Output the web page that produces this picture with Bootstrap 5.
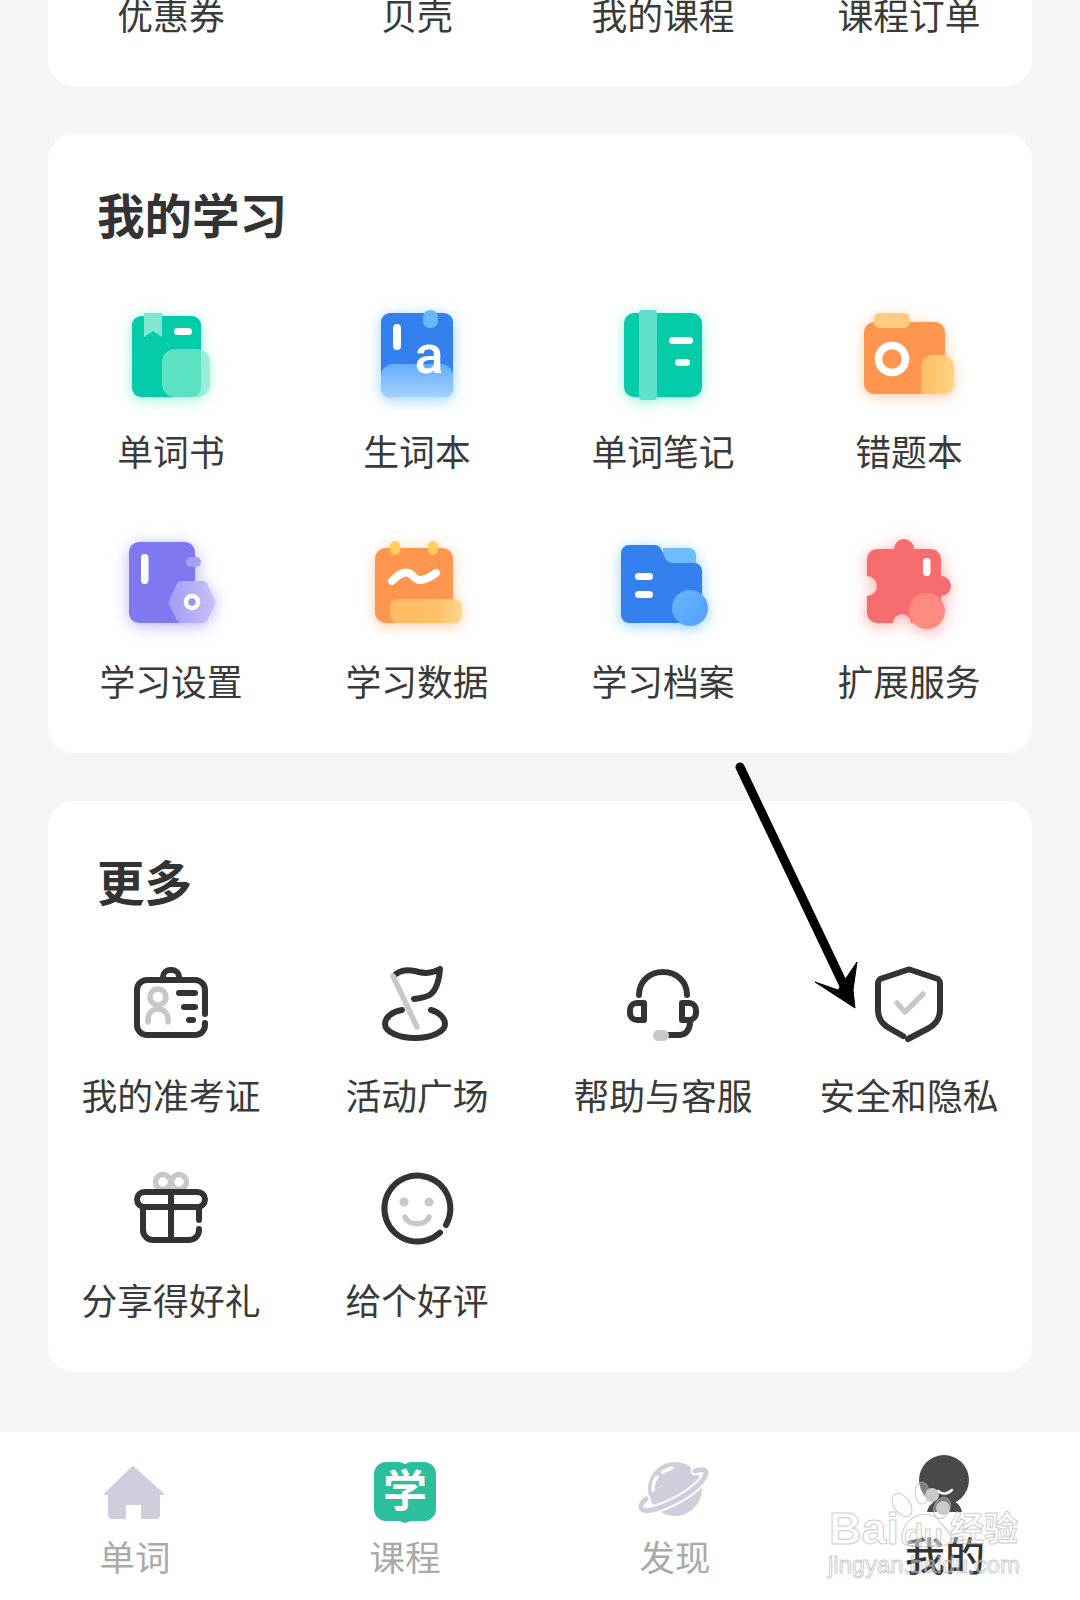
<!DOCTYPE html>
<html lang="zh">
<head>
<meta charset="utf-8">
<title>我的</title>
<link href="https://cdn.jsdelivr.net/npm/bootstrap@5.3.0/dist/css/bootstrap.min.css" rel="stylesheet">
<style>
html,body{height:1600px;overflow:hidden}
body{background:#f5f5f5;color:#333;font-family:"Noto Sans CJK SC","Noto Sans",sans-serif;position:relative;width:1080px}
.sheet{padding:0 48px}
.panel-box{border:0;border-radius:26px;background:#fff}
.panel-top{height:86px;border-radius:0 0 26px 26px;margin-bottom:48px}
.panel-top .tile-name{margin-top:-11px}
.panel-study{height:619px;padding-top:50px;margin-bottom:48px}
.panel-more{height:571px;padding-top:50px}
.panel-title{font-size:47.500px;line-height:60px;font-weight:700;color:#333;margin:0 0 0 49px}
.panel-study .tile-grid{margin-top:61px}
.panel-more .tile-grid{margin-top:44px}
.tile-name{font-size:35.800px;line-height:50px;color:#3a3a3a;white-space:nowrap}
.tile-art{display:block;width:100px;height:100px;margin:0 auto}
.panel-study .tile-name{margin-top:20px}
.panel-study .tile-cell{height:230px}
.panel-more .tile-name{margin-top:14px}
.panel-more .tile-cell{height:205px}
.shine-green{filter:drop-shadow(0 3px 7px rgba(60,230,180,.5))}
.shine-blue{filter:drop-shadow(0 3px 7px rgba(70,170,255,.55))}
.shine-orange{filter:drop-shadow(0 3px 7px rgba(255,160,90,.5))}
.shine-violet{filter:drop-shadow(0 3px 8px rgba(130,120,240,.55))}
.shine-red{filter:drop-shadow(0 3px 8px rgba(250,110,110,.55))}
.ink{fill:none;stroke:#333;stroke-width:6;stroke-linecap:round;stroke-linejoin:round}
.ash{fill:none;stroke:#c8c8c8;stroke-width:5.5;stroke-linecap:round;stroke-linejoin:round}
.tabbar{margin-top:60px;height:168px;background:#fff;padding-top:12px}
.tab-art{display:block;width:100px;height:90px;margin:0 auto}
.tab-name{font-size:35.500px;line-height:46px;color:#aaa;margin-top:-1px}
.tab-on{color:#333;font-size:40px;font-weight:500;margin-top:-3px}
.pointer-mark{position:absolute;left:730px;top:760px;width:140px;height:260px;pointer-events:none}
.stamp{position:absolute;left:820px;top:1478px;width:210px;height:110px;pointer-events:none}
.stamp-line{position:absolute;white-space:nowrap;color:rgba(255,255,255,.35);-webkit-text-stroke:1px rgba(175,175,175,.65);font-family:"Liberation Sans",sans-serif}
.stamp-bai{left:9px;top:28px;font-size:45px;line-height:46px;font-weight:700}
.stamp-du{left:84px;top:42px;font-size:32px;line-height:30px;font-weight:700}
.stamp-jing{left:130px;top:29px;font-size:34px;line-height:40px;font-family:"Noto Sans CJK SC",sans-serif;font-weight:700}
.stamp-url{left:8px;top:72px;font-size:23.800px;line-height:30px}
.stamp-paw{position:absolute;left:0;top:0;width:210px;height:110px}
</style>
</head>
<body>
<svg width="0" height="0" class="position-absolute" aria-hidden="true">
<defs>
<linearGradient id="gBluePanel" x1="0" y1="0" x2="0" y2="1"><stop offset="0" stop-color="#62acfa"/><stop offset="1" stop-color="#a3d2fd"/></linearGradient>
<linearGradient id="gOrangePanel" x1="0" y1="0" x2="1" y2="0"><stop offset="0" stop-color="#ffbd62"/><stop offset="1" stop-color="#ffd386"/></linearGradient>
<linearGradient id="gOrangeWide" x1="0" y1="0" x2="1" y2="0"><stop offset="0" stop-color="#ffbd62"/><stop offset=".65" stop-color="#ffbf66"/><stop offset="1" stop-color="#ffd88e"/></linearGradient>
<linearGradient id="gViolet" x1="0" y1="0" x2="1" y2="0"><stop offset="0" stop-color="#a49cf5"/><stop offset="1" stop-color="#c6c1fa"/></linearGradient>
<linearGradient id="gDot" x1="0" y1="0" x2="1" y2="1"><stop offset="0" stop-color="#6bb6fb"/><stop offset="1" stop-color="#4f9ffa"/></linearGradient>
</defs>
</svg>
<main class="sheet">
  <section class="card panel-box panel-top">
    <div class="row g-0 text-center">
      <div class="col-3 tile-name">优惠券</div>
      <div class="col-3 tile-name">贝壳</div>
      <div class="col-3 tile-name">我的课程</div>
      <div class="col-3 tile-name">课程订单</div>
    </div>
  </section>

  <section class="card panel-box panel-study">
    <h2 class="panel-title">我的学习</h2>
    <div class="row g-0 text-center tile-grid">
      <div class="col-3 tile-cell">
        <svg class="tile-art shine-green" viewBox="0 0 100 100"><rect x="11" y="11" width="69" height="81" rx="9" fill="#04cba8"/><path d="M23 8h18v24l-9-6-9 6z" fill="#7fe6d2"/><rect x="53" y="23" width="18" height="7" rx="3.5" fill="#fff"/><rect x="41" y="44" width="48" height="48" rx="13" fill="rgb(131,233,210)" opacity=".7"/></svg>
        <div class="tile-name">单词书</div>
      </div>
      <div class="col-3 tile-cell">
        <svg class="tile-art shine-blue" viewBox="0 0 100 100"><rect x="14" y="8" width="72" height="84" rx="9" fill="#3480ee"/><path d="M14 71a12 12 0 0 1 12-12h48a12 12 0 0 1 12 12v12a9 9 0 0 1-9 9H23a9 9 0 0 1-9-9z" fill="url(#gBluePanel)"/><rect x="56" y="5" width="15" height="18" rx="7" fill="#6cb8f8"/><rect x="26" y="19" width="8" height="26" rx="4" fill="#fff"/><text x="62" y="68" text-anchor="middle" font-family="Roboto,sans-serif" font-weight="500" font-size="54" fill="#fff">a</text></svg>
        <div class="tile-name">生词本</div>
      </div>
      <div class="col-3 tile-cell">
        <svg class="tile-art shine-green" viewBox="0 0 100 100"><rect x="11" y="8" width="78" height="84" rx="10" fill="#04cba8"/><rect x="26" y="5" width="18" height="90" rx="3" fill="#5fe0c8"/><rect x="56" y="32" width="24" height="7" rx="3.5" fill="#fff"/><rect x="62" y="54" width="15" height="7" rx="3.5" fill="#fff"/></svg>
        <div class="tile-name">单词笔记</div>
      </div>
      <div class="col-3 tile-cell">
        <svg class="tile-art shine-orange" viewBox="0 0 100 100"><rect x="5" y="17" width="81" height="72" rx="10" fill="#ff964f"/><rect x="15" y="8" width="36" height="15" rx="6" fill="#ffcc80"/><circle cx="33" cy="54" r="13.5" fill="none" stroke="#fff" stroke-width="7.5"/><path d="M62 62a12 12 0 0 1 12-12h9a12 12 0 0 1 12 12v17a10 10 0 0 1-10 10H62z" fill="url(#gOrangePanel)"/></svg>
        <div class="tile-name">错题本</div>
      </div>

      <div class="col-3 tile-cell">
        <svg class="tile-art shine-violet" viewBox="0 0 100 100"><rect x="8" y="7" width="66" height="81" rx="10" fill="#7f78ee"/><rect x="20" y="19" width="7.500" height="30" rx="3.700" fill="#fff"/><rect x="65" y="22" width="15" height="10" rx="5" fill="#a79ff5"/><path d="M60 46h22a5 5 0 0 1 4 2.500l8 17a5 5 0 0 1 0 4l-8 16a5 5 0 0 1-4 2.500H60a5 5 0 0 1-4-2.500l-8-16a5 5 0 0 1 0-4l8-17a5 5 0 0 1 4-2.500z" fill="url(#gViolet)"/><circle cx="71" cy="67" r="8.300" fill="#fff"/><circle cx="71" cy="67" r="3.700" fill="#9b93f0"/></svg>
        <div class="tile-name">学习设置</div>
      </div>
      <div class="col-3 tile-cell">
        <svg class="tile-art shine-orange" viewBox="0 0 100 100"><rect x="8" y="13" width="78" height="75" rx="11" fill="#ff964f"/><rect x="23" y="6" width="10" height="14" rx="5" fill="#ffce5f"/><rect x="61" y="6" width="10" height="14" rx="5" fill="#ffce5f"/><path d="M25 46C31 40 36 36 42 38 47 40 48 46 54 45 60 44 65 41 69 38" fill="none" stroke="#fff" stroke-width="8" stroke-linecap="round"/><rect x="23" y="64" width="72" height="24" rx="8" fill="url(#gOrangeWide)"/></svg>
        <div class="tile-name">学习数据</div>
      </div>
      <div class="col-3 tile-cell">
        <svg class="tile-art shine-blue" viewBox="0 0 100 100"><path d="M50 13h26a7 7 0 0 1 7 7v20H50z" fill="#6dbdfb"/><path d="M8 18a8 8 0 0 1 8-8h26c4 0 6 3 8 8 2 6 4 10 10 10h21a8 8 0 0 1 8 8v44a8 8 0 0 1-8 8H16a8 8 0 0 1-8-8z" fill="#3480ee"/><rect x="22" y="38" width="18" height="7" rx="3.500" fill="#fff"/><rect x="22" y="56" width="18" height="7" rx="3.500" fill="#fff"/><circle cx="77" cy="73" r="18" fill="url(#gDot)"/></svg>
        <div class="tile-name">学习档案</div>
      </div>
      <div class="col-3 tile-cell">
        <svg class="tile-art shine-red" viewBox="0 0 100 100"><path d="M18 14H35A10 10 0 0 1 55 14H72A10 10 0 0 1 82 24V41A10 10 0 0 1 82 61V78A10 10 0 0 1 72 88H52A9 9 0 0 0 34 88H18A10 10 0 0 1 8 78V61A10 10 0 0 0 8 41V24A10 10 0 0 1 18 14Z" fill="#f76d6f"/><rect x="64" y="23" width="7.500" height="18" rx="3.700" fill="#fff"/><circle cx="68" cy="76" r="18" fill="#ff8a82"/></svg>
        <div class="tile-name">扩展服务</div>
      </div>
    </div>
  </section>

  <section class="card panel-box panel-more">
    <h2 class="panel-title">更多</h2>
    <div class="row g-0 text-center tile-grid">
      <div class="col-3 tile-cell">
        <svg class="tile-art" viewBox="0 0 100 100"><path class="ink" d="M84 59V35a10 10 0 0 0-10-10H26a10 10 0 0 0-10 10V70a10 10 0 0 0 10 10H74a10 10 0 0 0 10-10V68"/><path class="ink" d="M42 25v-3a7 7 0 0 1 7-7h2a7 7 0 0 1 7 7v3"/><circle class="ash" cx="37" cy="42" r="8"/><path class="ash" d="M27 67v-3a10 10 0 0 1 20 0v3"/><path class="ink" d="M58 38H74M63 52H74M68 65H72"/></svg>
        <div class="tile-name">我的准考证</div>
      </div>
      <div class="col-3 tile-cell">
        <svg class="tile-art" viewBox="0 0 100 100"><path class="ink" d="M29 19C36 14 45 15 52 17 60 19 66 18 73 14 72 26 70 34 64 39 59 43 52 43 47 44"/><path class="ash" d="M26 21 50 72"/><path class="ink" d="M35 55C24 57 18 63 18 69 18 77 32 83 48 83 64 83 78 77 78 69 78 63 72 57 64 55"/></svg>
        <div class="tile-name">活动广场</div>
      </div>
      <div class="col-3 tile-cell">
        <svg class="tile-art" viewBox="0 0 100 100"><path class="ink" d="M26 40C26 26 37 17 50 17S74 26 74 40"/><path class="ink" d="M31 48H24a7 7 0 0 0-7 7v3a7 7 0 0 0 7 7H31Z"/><path class="ink" d="M69 48H76a7 7 0 0 1 7 7v3a7 7 0 0 1-7 7H69Z"/><path class="ink" d="M77 69C76 76 72 80 66 80H55"/><rect x="40" y="75" width="16" height="11" rx="5.500" fill="#c8c8c8"/></svg>
        <div class="tile-name">帮助与客服</div>
      </div>
      <div class="col-3 tile-cell">
        <svg class="tile-art" viewBox="0 0 100 100"><path class="ink" d="M44 81 30 73C23 69 19 63 19 55V28C19 26 20 25 21 24L48 15Q50 14 52 15L79 24C80 25 81 26 81 28V55C81 63 77 69 70 73L49 84"/><path class="ash" stroke-width="6" d="M38 48 46 57 64 39"/></svg>
        <div class="tile-name">安全和隐私</div>
      </div>
      <div class="col-3 tile-cell">
        <svg class="tile-art" viewBox="0 0 100 100"><circle class="ash" cx="42" cy="22" r="7.500"/><circle class="ash" cx="58" cy="22" r="7.500"/><rect class="ink" x="16" y="32" width="68" height="15" rx="7.500"/><path class="ink" d="M22 47V70a10 10 0 0 0 10 10H68a10 10 0 0 0 10-10V69M78 60V48M50 32V80"/></svg>
        <div class="tile-name">分享得好礼</div>
      </div>
      <div class="col-3 tile-cell">
        <svg class="tile-art" viewBox="0 0 100 100"><path class="ink" d="M79 65A33 33 0 1 0 73 72.600"/><circle cx="37" cy="42" r="4.500" fill="#c8c8c8"/><circle cx="62" cy="42" r="4.500" fill="#c8c8c8"/><path class="ash" d="M38 57C41 66 59 66 62 57"/></svg>
        <div class="tile-name">给个好评</div>
      </div>
    </div>
  </section>
</main>

<nav class="tabbar row g-0 text-center">
  <div class="col-3">
    <svg class="tab-art" viewBox="0 0 100 90"><path d="M48 23 20 50H24V71a3 3 0 0 0 3 3H40V60H57V74H71a3 3 0 0 0 3-3V50H78Z" fill="#cdd0dc" stroke="#cdd0dc" stroke-width="2" stroke-linejoin="round"/></svg>
    <div class="tab-name">单词</div>
  </div>
  <div class="col-3">
    <svg class="tab-art" viewBox="0 0 100 90"><path d="M31 18H45L50 20 55 18H69A12 12 0 0 1 81 30V65A12 12 0 0 1 69 77H56L50 79 44 77H31A12 12 0 0 1 19 65V30A12 12 0 0 1 31 18Z" fill="#2bbf9c"/><text x="50" y="63" text-anchor="middle" font-family="'Noto Sans CJK SC',sans-serif" font-weight="700" font-size="44" fill="#fff">学</text></svg>
    <div class="tab-name">课程</div>
  </div>
  <div class="col-3">
    <svg class="tab-art" viewBox="0 0 100 90"><circle cx="50" cy="45" r="27" fill="#cdd0dc"/><path d="M70 27C76 25 81 25 81 29 81 36 66 49 50 57 34 65 20 69 17 65 15 62 17 58 21 55" fill="none" stroke="#fff" stroke-width="9" stroke-linecap="round"/><path d="M70 27C76 25 81 25 81 29 81 36 66 49 50 57 34 65 20 69 17 65 15 62 17 58 21 55" fill="none" stroke="#cdd0dc" stroke-width="5" stroke-linecap="round"/><path d="M28 46C28 41 29 36 32 33M38 28C41 26 44 25 47 24" fill="none" stroke="#fff" stroke-width="3.500" stroke-linecap="round"/></svg>
    <div class="tab-name">发现</div>
  </div>
  <div class="col-3">
    <svg class="tab-art" viewBox="0 0 100 90"><circle cx="49" cy="36" r="25" fill="#4a4a4a"/><path d="M43 47C47 51 53 50 57 46" fill="none" stroke="#fff" stroke-width="2.500" stroke-linecap="round"/><path d="M32 68C33 62 38 58 43 56 47 59 53 59 56 56 62 58 66 62 67 68Z" fill="#4a4a4a"/></svg>
    <div class="tab-name tab-on">我的</div>
  </div>
</nav>

<svg class="pointer-mark" viewBox="730 760 140 260"><path d="M740 767 847 992" stroke="#000" stroke-width="9" stroke-linecap="round" fill="none"/><path d="M855 1008 815 982 838 990 857 962 853 990Z" fill="#000" stroke="#000" stroke-width="1"/></svg>

<div class="stamp">
  <svg class="stamp-paw" viewBox="0 0 210 110"><g fill="rgba(255,255,255,.3)" stroke="rgba(175,175,175,.6)" stroke-width="1.200"><ellipse cx="82" cy="27" rx="8" ry="13" transform="rotate(-35 82 27)"/><ellipse cx="102" cy="15" rx="7" ry="11"/><ellipse cx="122" cy="30" rx="8" ry="11" transform="rotate(25 122 30)"/><path d="M84 50C92 34 112 32 120 44 126 52 134 56 130 64 126 70 90 70 84 66 80 62 82 54 84 50Z"/></g><circle cx="112" cy="17" r="7" fill="#c9c9c9"/><circle cx="123" cy="30" r="7" fill="#c9c9c9"/></svg>
  <span class="stamp-line stamp-bai">Bai</span>
  <span class="stamp-line stamp-du">du</span>
  <span class="stamp-line stamp-jing">经验</span>
  <span class="stamp-line stamp-url">jingyan.baidu.com</span>
</div>
<script src="https://cdn.jsdelivr.net/npm/bootstrap@5.3.0/dist/js/bootstrap.bundle.min.js"></script>
</body>
</html>
